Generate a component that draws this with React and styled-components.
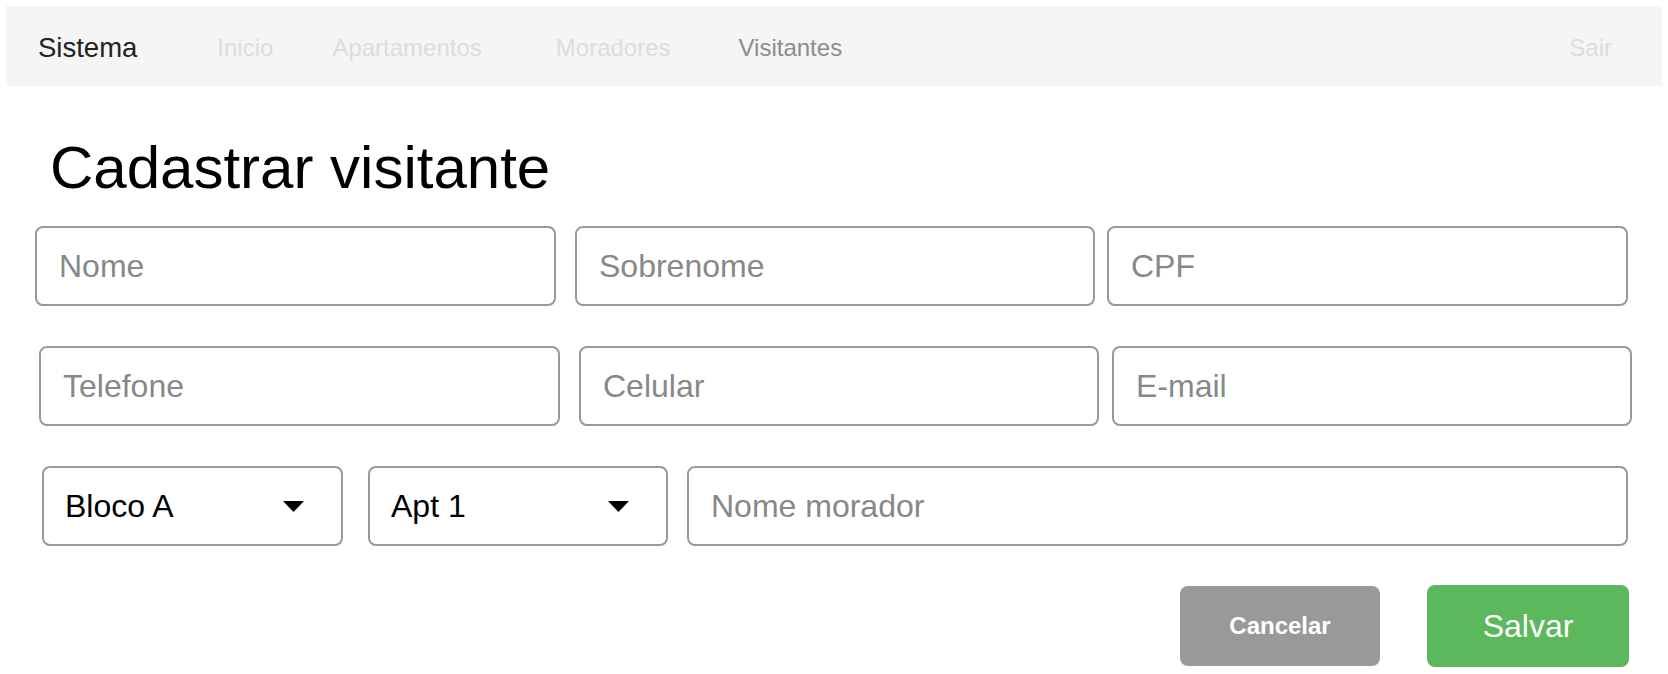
import React from "react";
import styled, { createGlobalStyle } from "styled-components";

const GlobalStyle = createGlobalStyle`
  *, *::before, *::after { box-sizing: border-box; }
  html, body { margin: 0; padding: 0; background: #ffffff; }
  body { font-family: "Liberation Sans", Arial, sans-serif; }
`;

const Page = styled.div`
  padding: 6px;
  font-family: "Liberation Sans", Arial, sans-serif;
`;

const Navbar = styled.nav`
  display: flex;
  align-items: center;
  height: 80px;
  background: #f5f5f5;
  padding: 4px 50px 0 32px;
`;

const Brand = styled.span`
  font-size: 27.5px;
  color: #222222;
`;

const NavLink = styled.a`
  font-size: 24px;
  color: ${(p) => (p.$active ? "#8c8c8c" : "#dcdcdc")};
  margin-left: ${(p) => p.$ml || 0}px;
  text-decoration: none;
  cursor: pointer;
`;

const Spacer = styled.div`
  flex: 1;
`;

const Title = styled.h1`
  margin: 52px 0 0 44px;
  font-size: 60px;
  line-height: 60px;
  font-weight: 400;
  color: #000000;
`;

const Row = styled.div`
  display: flex;
  align-items: center;
  margin-top: ${(p) => p.$mt}px;
`;

const ButtonRow = styled(Row)`
  justify-content: flex-end;
  padding-right: 33px;
`;

const Input = styled.input`
  width: ${(p) => p.$w}px;
  height: 80px;
  margin-left: ${(p) => p.$ml || 0}px;
  padding: 0 22px;
  border: 2px solid #999999;
  border-radius: 8px;
  font-family: "Liberation Sans", Arial, sans-serif;
  font-size: 32px;
  color: #000;
  background: #fff;
  outline: none;
  &::placeholder {
    color: #888888;
    opacity: 1;
  }
`;

const Select = styled.div`
  display: flex;
  align-items: center;
  justify-content: space-between;
  width: ${(p) => p.$w}px;
  height: 80px;
  margin-left: ${(p) => p.$ml || 0}px;
  padding: 0 37px 0 21px;
  border: 2px solid #999999;
  border-radius: 8px;
  font-size: 32px;
  color: #000;
  background: #fff;
  cursor: pointer;
`;

const Button = styled.button`
  width: ${(p) => p.$w}px;
  height: ${(p) => p.$h}px;
  margin-left: ${(p) => p.$ml || 0}px;
  border: none;
  border-radius: 8px;
  background: ${(p) => p.$bg};
  color: #ffffff;
  font-family: "Liberation Sans", Arial, sans-serif;
  font-size: ${(p) => p.$fs}px;
  font-weight: ${(p) => (p.$bold ? 700 : 400)};
  cursor: pointer;
`;

const Caret = () => (
  <svg width="21" height="11" viewBox="0 0 21 11" aria-hidden="true">
    <path d="M0 0 L21 0 L10.5 11 Z" fill="#000" />
  </svg>
);

export default function App() {
  return (
    <Page>
      <GlobalStyle />
      <Navbar>
        <Brand>Sistema</Brand>
        <NavLink $ml={80}>Inicio</NavLink>
        <NavLink $ml={59}>Apartamentos</NavLink>
        <NavLink $ml={74}>Moradores</NavLink>
        <NavLink $ml={68} $active>
          Visitantes
        </NavLink>
        <Spacer />
        <NavLink>Sair</NavLink>
      </Navbar>

      <Title>Cadastrar visitante</Title>

      <Row $mt={28}>
        <Input $ml={29} $w={521} placeholder="Nome" />
        <Input $ml={19} $w={520} placeholder="Sobrenome" />
        <Input $ml={12} $w={521} placeholder="CPF" />
      </Row>

      <Row $mt={40}>
        <Input $ml={33} $w={521} placeholder="Telefone" />
        <Input $ml={19} $w={520} placeholder="Celular" />
        <Input $ml={13} $w={520} placeholder="E-mail" />
      </Row>

      <Row $mt={40}>
        <Select $ml={36} $w={301}>
          <span>Bloco A</span>
          <Caret />
        </Select>
        <Select $ml={25} $w={300}>
          <span>Apt 1</span>
          <Caret />
        </Select>
        <Input $ml={19} $w={941} placeholder="Nome morador" />
      </Row>

      <ButtonRow $mt={39}>
        <Button $w={200} $h={80} $bg="#999999" $fs={24} $bold>
          Cancelar
        </Button>
        <Button $ml={47} $w={202} $h={82} $bg="#5cb85c" $fs={32}>
          Salvar
        </Button>
      </ButtonRow>
    </Page>
  );
}
